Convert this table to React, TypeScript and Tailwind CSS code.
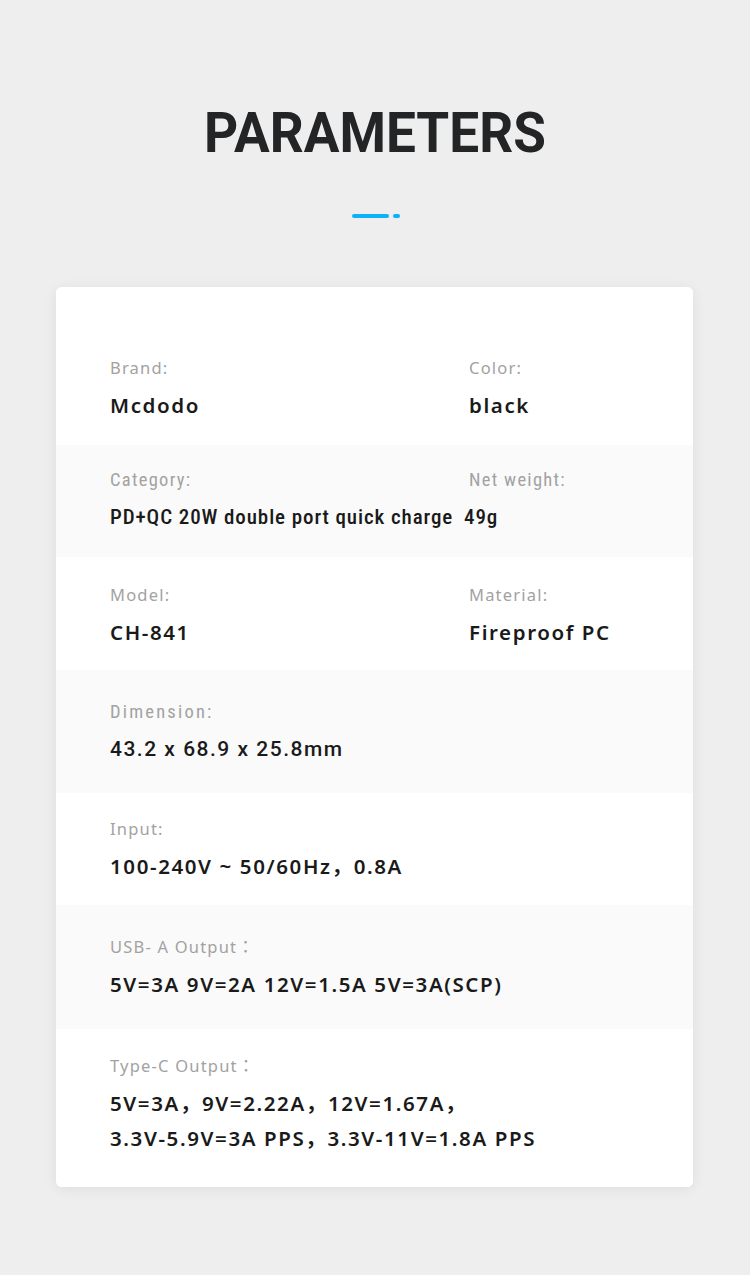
import React from "react";

const sans = "font-['Noto_Sans','Noto_Sans_CJK_JP',sans-serif]";
const din = "font-['Roboto_Condensed','Roboto','Liberation_Sans',sans-serif]";
const roboto = "font-['Roboto','Liberation_Sans',sans-serif]";

type Cell = { label: string; value: React.ReactNode; valueClass?: string; labelClass?: string };

function Field({
  label,
  value,
  valueClass,
  labelClass,
  condensed,
  wide,
}: Cell & { condensed?: boolean; wide?: boolean }) {
  const labelCls = condensed
    ? `${din} text-[18.5px] leading-[24px] text-[#a2a2a2]`
    : `${sans} text-[16.5px] leading-[24px] text-[#a2a2a2] tracking-[1.2px]`;
  const valueCls = wide
    ? `${roboto} font-medium text-[21px] leading-[35px] text-[#1a1a1a] tracking-[1.5px]`
    : condensed
    ? `${din} font-medium text-[21px] leading-[35px] text-[#1a1a1a] tracking-[0.9px]`
    : `${sans} font-semibold text-[20.5px] leading-[35px] text-[#1a1a1a] tracking-[1.6px]`;
  return (
    <div>
      <div className={labelCls + " " + (labelClass ?? (condensed ? "tracking-[1.3px]" : ""))}>{label}</div>
      <div className={valueCls + " mt-[8px] " + (valueClass ?? "")}>{value}</div>
    </div>
  );
}

export default function App() {
  return (
    <div className="min-h-[1275px] w-[750px] bg-[#eeeeee] pt-[105px] pb-[88px]">
      <h1 className="text-center font-['Roboto','Liberation_Sans',sans-serif] font-bold text-[55px] leading-[56px] tracking-[0px] text-[#222426] scale-x-[0.966]">
        PARAMETERS
      </h1>
      <div className="mt-[53px] flex justify-center items-center gap-[4px] h-[4px] pl-[1px]">
        <div className="w-[37px] h-[4px] rounded-full bg-[#0db1f7]" />
        <div className="w-[7px] h-[4px] rounded-full bg-[#0db1f7]" />
      </div>
      <div className="mt-[69px] mx-[56px] w-[637px] rounded-[6px] bg-white shadow-[0_2px_14px_rgba(0,0,0,0.07)] overflow-hidden">
        {/* Row 1 */}
        <div className="h-[158px] pt-[69px] pl-[54px] grid grid-cols-[359px_1fr] bg-white">
          <Field label="Brand:" value="Mcdodo" />
          <Field label="Color:" value="black" />
        </div>
        {/* Row 2 */}
        <div className="h-[112px] pt-[23px] pl-[54px] grid grid-cols-[359px_1fr] bg-[#fafafa]">
          <Field condensed label="Category:" value="PD+QC 20W double port quick charge" />
          <Field condensed label="Net weight:" value="49g" valueClass="-ml-[5px]" />
        </div>
        {/* Row 3 */}
        <div className="h-[113px] pt-[26px] pl-[54px] grid grid-cols-[359px_1fr] bg-white">
          <Field label="Model:" value="CH-841" />
          <Field label="Material:" value="Fireproof PC" />
        </div>
        {/* Row 4 */}
        <div className="h-[123px] pt-[30px] pl-[54px] bg-[#fafafa]">
          <Field condensed wide label="Dimension:" labelClass="tracking-[2.2px]" value="43.2 x 68.9 x 25.8mm" />
        </div>
        {/* Row 5 */}
        <div className="h-[112px] pt-[24px] pl-[54px] bg-white">
          <Field label="Input:" value="100-240V ~ 50/60Hz，0.8A" />
        </div>
        {/* Row 6 */}
        <div className="h-[124px] pt-[30px] pl-[54px] bg-[#fafafa]">
          <Field label="USB- A Output：" value="5V=3A 9V=2A 12V=1.5A 5V=3A(SCP)" />
        </div>
        {/* Row 7 */}
        <div className="h-[158px] pt-[25px] pl-[54px] bg-white">
          <Field
            label="Type-C Output："
            value={
              <>
                <div>5V=3A，9V=2.22A，12V=1.67A，</div>
                <div>3.3V-5.9V=3A PPS，3.3V-11V=1.8A PPS</div>
              </>
            }
          />
        </div>
      </div>
    </div>
  );
}
